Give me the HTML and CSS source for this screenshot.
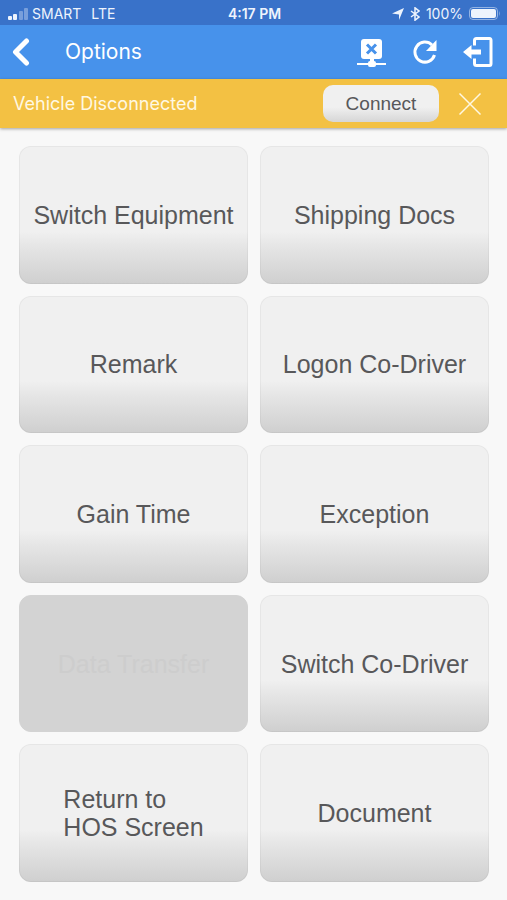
FILE: index.html
```html
<!DOCTYPE html>
<html lang="en">
<head>
<meta charset="utf-8">
<meta name="viewport" content="width=device-width, initial-scale=1">
<title>Options</title>
<link rel="stylesheet" href="styles.css">
</head>
<body>
<div class="status">
  <div class="status-side">
    <svg class="signal" width="20" height="12" viewBox="0 0 20 12" aria-hidden="true">
      <rect x="0" y="8" width="4" height="4" rx="1"/>
      <rect x="5" y="6" width="4" height="6" rx="1"/>
      <rect class="weak" x="11" y="3" width="4" height="9" rx="1"/>
      <rect class="weak" x="16" y="0" width="4" height="12" rx="1"/>
    </svg>
    <span class="carrier">SMART</span>
    <span>LTE</span>
  </div>
  <span class="clock">4:17 PM</span>
  <div class="status-side status-right">
    <svg width="12" height="12" viewBox="0 0 12 12" aria-hidden="true"><path d="M12 0 7 12V6.500L0 5.500z"/></svg>
    <svg class="bluetooth" width="10" height="14" viewBox="0 0 10 14" aria-hidden="true"><path d="M1 4l8 6-4 3.200V.8L9 4l-8 6"/></svg>
    <span>100%</span>
    <svg width="32" height="13" viewBox="0 0 32 13" aria-hidden="true">
      <rect class="battery-case" x=".5" y=".5" width="28" height="12" rx="3.5"/>
      <rect x="2" y="2" width="25" height="9" rx="2"/>
      <path class="weak" d="M30 4q2 2.500 0 5z"/>
    </svg>
  </div>
</div>
<header class="nav">
  <button class="icon-button" aria-label="Back">
    <svg width="18" height="28" viewBox="0 0 18 28"><path class="chevron" d="M14.500 3 3.500 14l11 11"/></svg>
  </button>
  <h1>Options</h1>
  <div class="actions">
    <button class="icon-button" aria-label="Vehicle connection">
      <svg width="30" height="30" viewBox="0 0 30 30">
        <rect x="4" y="2" width="21" height="20" rx="3"/>
        <rect x="13" y="21" width="4" height="4"/>
        <path class="node-cross" d="M10 7.500l9 9M19 7.500l-9 9"/>
        <rect x="0" y="26" width="29" height="2"/>
        <rect x="11" y="24" width="8" height="6" rx="2"/>
      </svg>
    </button>
    <button class="icon-button" aria-label="Refresh">
      <svg width="26" height="26" viewBox="0 0 26 26">
        <path class="stroke" d="M20 6A10 10 0 1 0 22.500 16"/>
        <path d="M24.500 1v11H14z"/>
      </svg>
    </button>
    <button class="icon-button" aria-label="Log out">
      <svg width="30" height="30" viewBox="0 0 30 30">
        <path class="stroke" d="M11.500 8.500V3.500q0-2 2-2h13q1.500 0 1.500 2v23q0 2-1.500 2h-13q-2 0-2-2v-5"/>
        <path d="M0 15l8.500-7v4.500H18v5H8.500V22z"/>
      </svg>
    </button>
  </div>
</header>
<div class="banner" role="status">
  <span class="banner-text">Vehicle Disconnected</span>
  <button class="connect">Connect</button>
  <button class="icon-button" aria-label="Dismiss">
    <svg width="24" height="24" viewBox="0 0 24 24"><path class="cross" d="M1.500 1.500l21 21M22.500 1.500l-21 21"/></svg>
  </button>
</div>
<main class="grid">
  <button class="tile">Switch Equipment</button>
  <button class="tile">Shipping Docs</button>
  <button class="tile">Remark</button>
  <button class="tile">Logon Co-Driver</button>
  <button class="tile">Gain Time</button>
  <button class="tile">Exception</button>
  <button class="tile" disabled>Data Transfer</button>
  <button class="tile">Switch Co-Driver</button>
  <button class="tile"><span>Return to<br>HOS Screen</span></button>
  <button class="tile">Document</button>
</main>
</body>
</html>
```
FILE: styles.css
```css
* { box-sizing: border-box; }

body {
  margin: 0;
  min-height: 100vh;
  display: flex;
  flex-direction: column;
  background: #f8f8f8;
  font-family: Inter, "Liberation Sans", sans-serif;
}

button {
  border: 0;
  padding: 0;
  margin: 0;
  background: none;
  font: inherit;
  color: inherit;
}

svg { display: block; fill: currentColor; }

.status {
  display: grid;
  grid-template-columns: 1fr auto 1fr;
  align-items: center;
  height: 25px;
  padding: 2px 6px 0 8px;
  background: #3972c9;
  color: #eef4fd;
  font-size: 14px;
  line-height: 16px;
}

.status-side { display: flex; align-items: center; gap: 4px; }
.status-right { justify-content: flex-end; gap: 6px; }
.carrier { margin-right: 6px; }
.clock { font-weight: 600; }
.weak { opacity: .35; }

.bluetooth { fill: none; stroke: currentColor; stroke-width: 1.5; }
.battery-case { fill: none; stroke: currentColor; opacity: .5; }

.nav {
  display: flex;
  align-items: center;
  height: 54px;
  padding: 0 14px 0 12px;
  background: #4792eb;
  color: #fff;
}

.nav h1 {
  flex: 1;
  margin: 0 0 0 35px;
  font-size: 21px;
  font-weight: 400;
  line-height: 28px;
}

.actions { display: flex; align-items: center; gap: 25px; }

.chevron {
  fill: none;
  stroke: currentColor;
  stroke-width: 5;
  stroke-linecap: round;
  stroke-linejoin: round;
}

.stroke { fill: none; stroke: currentColor; stroke-width: 3; }
.node-cross { fill: none; stroke: #4792eb; stroke-width: 3; }

.banner {
  display: flex;
  align-items: center;
  height: 49px;
  padding: 0 25px 0 13px;
  background: #f3c143;
  color: #fff8e2;
  box-shadow: 0 1px 3px rgba(0, 0, 0, .35);
}

.banner-text { flex: 1; font-size: 18px; line-height: 24px; }

.connect {
  width: 116px;
  height: 37px;
  margin-right: 19px;
  border-radius: 10px;
  background: linear-gradient(#f0f0f0 60%, #d6d6d6);
  color: #58585a;
  font-family: "Liberation Sans", sans-serif;
  font-size: 19px;
}

.cross { fill: none; stroke: currentColor; stroke-width: 1.5; }

.grid {
  flex: 1;
  display: grid;
  grid-template-columns: 1fr 1fr;
  grid-auto-rows: 1fr;
  gap: 12px;
  padding: 18px 18px 18px 19px;
}

.tile {
  min-height: 96px;
  border: 1px solid rgba(0, 0, 0, .04);
  border-radius: 12px;
  background: linear-gradient(#f0f0f0 62%, #e6e6e6 72%, #cfcfcf) border-box;
  color: #58585a;
  font-family: "Liberation Sans", sans-serif;
  font-size: 25px;
  line-height: 28px;
}

.tile span { display: inline-block; text-align: left; }

.tile:disabled { background: #d3d3d3; color: #cdcdcd; border-color: #d3d3d3; }
```
